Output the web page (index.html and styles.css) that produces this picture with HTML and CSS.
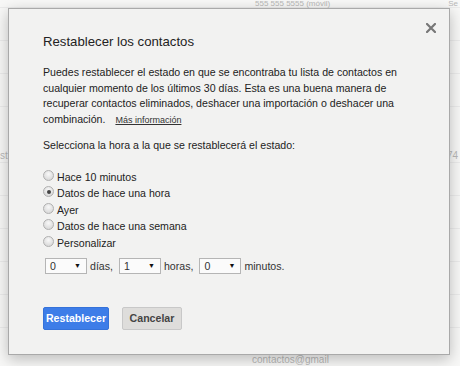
FILE: index.html
```html
<!DOCTYPE html>
<html>
    <head>
        <meta http-equiv="content-type" content="text/html;charset=utf-8">
        <title>Restablecer los contactos</title>
        <link rel="stylesheet" href="styles.css">
    </head>
    <body>
        <!-- lista de contactos detrás del diálogo -->
        <div class="page">
            <div class="row top-row">
                <span class="bg-phone">555 555 5555 (móvil)</span>
                <span class="bg-right">Se</span>
            </div>
            <div class="row"></div>
            <div class="row"></div>
            <div class="row"></div>
            <div class="row mid-row">
                <span class="bg-left">st</span>
                <span class="bg-right">74</span>
            </div>
            <div class="row"></div>
            <div class="row"></div>
            <div class="row"></div>
            <div class="row"></div>
            <div class="row"></div>
            <div class="row bottom-row">
                <span class="bg-bottom">contactos@gmail</span>
            </div>
        </div>

        <!-- diálogo -->
        <div class="dialog">
            <div class="close">
                <svg width="10" height="10" viewBox="0 0 10 10">
                    <path d="M1 1 L9 9 M9 1 L1 9" stroke="#777" stroke-width="2.2" stroke-linecap="square"/>
                </svg>
            </div>
            <h1 class="title">Restablecer los contactos</h1>
            <p class="intro"><span>Puedes restablecer el estado en que se encontraba tu lista de contactos en
                cualquier momento de los últimos 30 días. Esta es una buena manera de
                recuperar contactos eliminados, deshacer una importación o deshacer una</span>
                <span>combinación.</span><a class="more" href="#">Más información</a></p>
            <p class="ask">Selecciona la hora a la que se restablecerá el estado:</p>

            <ul class="options">
                <li><span class="radio"></span>Hace 10 minutos</li>
                <li><span class="radio checked"></span>Datos de hace una hora</li>
                <li><span class="radio"></span>Ayer</li>
                <li><span class="radio"></span>Datos de hace una semana</li>
                <li><span class="radio"></span>Personalizar</li>
            </ul>

            <div class="custom">
                <span class="select"><span class="val">0</span><span class="arrow">&#9660;</span></span>
                <span class="unit">días,</span>
                <span class="select"><span class="val">1</span><span class="arrow">&#9660;</span></span>
                <span class="unit">horas,</span>
                <span class="select"><span class="val">0</span><span class="arrow">&#9660;</span></span>
                <span class="unit">minutos.</span>
            </div>

            <div class="buttons">
                <button class="btn blue">Restablecer</button>
                <button class="btn grey">Cancelar</button>
            </div>
        </div>
    </body>
</html>
```

FILE: styles.css
```css
body {
    margin: 0;
    background: #f8f8f7;
    font-family: "Liberation Sans", Arial, sans-serif;
    color: #222;
    overflow: hidden;
}
/* fondo */
.page {
    width: 460px;
    height: 366px;
}
.row {
    height: 33px;
    border-bottom: 1px solid #ececec;
    display: flex;
    align-items: center;
    font-size: 10px;
    line-height: 11px;
    color: #b8b8b8;
    box-sizing: border-box;
}
.top-row {
    height: 8px;
    align-items: flex-start;
    font-size: 8px;
    line-height: 8px;
}
.bg-phone {
    margin-left: 255px;
}
.bg-right {
    margin-left: auto;
    margin-right: 2px;
}
.bg-left {
    margin-left: 0;
}
.mid-row {
    height: 56px;
    align-items: flex-end;
    padding-bottom: 1px;
}
.bottom-row {
    height: 38px;
    border-bottom: none;
    align-items: flex-end;
    padding-bottom: 1px;
}
.bg-bottom {
    margin-left: 252px;
}
/* diálogo */
.dialog {
    position: absolute;
    left: 8px;
    top: 8px;
    width: 442px;
    height: 347px;
    box-sizing: border-box;
    padding: 25px 30px 0 34px;
    background: #f2f2f1;
    border: 1px solid #a9a9a9;
    box-shadow: 0 4px 14px rgba(0, 0, 0, 0.25);
}
.close {
    position: absolute;
    right: 13px;
    top: 14px;
    width: 10px;
    height: 10px;
}
.close svg {
    display: block;
}
.title {
    margin: 0;
    font-size: 13.2px;
    line-height: 16px;
    font-weight: normal;
    color: #222;
}
.intro {
    margin: 15px 0 0 0;
    font-size: 10.6px;
    line-height: 15.6px;
}
.more {
    display: inline-block;
    margin-left: 10px;
    font-size: 9px;
    line-height: 11px;
    color: #333;
    text-decoration: underline;
}
.ask {
    margin: 10px 0 0 0;
    font-size: 10.6px;
    line-height: 16px;
}
/* opciones */
.options {
    list-style: none;
    margin: 15px 0 0 0;
    padding: 0;
}
.options li {
    display: flex;
    align-items: center;
    height: 16.5px;
    font-size: 10.6px;
}
.radio {
    width: 9px;
    height: 9px;
    border: 1px solid #b0b0b0;
    border-radius: 50%;
    background: radial-gradient(circle at 50% 35%, #f8f8f8 0%, #d6d6d6 85%);
    margin-right: 3px;
    margin-top: -3px;
    display: flex;
    align-items: center;
    justify-content: center;
    flex-shrink: 0;
}
.radio.checked::after {
    content: "";
    width: 4px;
    height: 4px;
    border-radius: 50%;
    background: #444;
}
/* personalizar */
.custom {
    display: flex;
    align-items: center;
    margin: 7px 0 0 2px;
    font-size: 10.6px;
}
.select {
    display: flex;
    align-items: center;
    width: 42px;
    height: 16px;
    box-sizing: border-box;
    border: 1px solid #b5b5b5;
    background: #fbfbfb;
    padding: 0 5px 0 4px;
    color: #333;
}
.val {
    flex: 1;
}
.arrow {
    font-size: 7px;
    color: #111;
}
.unit {
    margin: 0 6px 0 3px;
    color: #333;
}
/* botones */
.buttons {
    display: flex;
    margin-top: 33px;
}
.btn {
    height: 23px;
    box-sizing: border-box;
    font-family: "Liberation Sans", Arial, sans-serif;
    font-size: 10.6px;
    font-weight: bold;
    border-radius: 2px;
    padding: 0;
}
.blue {
    width: 66px;
    background: #3d7de8;
    border: 1px solid #3572d9;
    color: #fff;
}
.grey {
    width: 60px;
    margin-left: 13px;
    background: #dedddb;
    border: 1px solid #c8c8c8;
    color: #444;
}
```
